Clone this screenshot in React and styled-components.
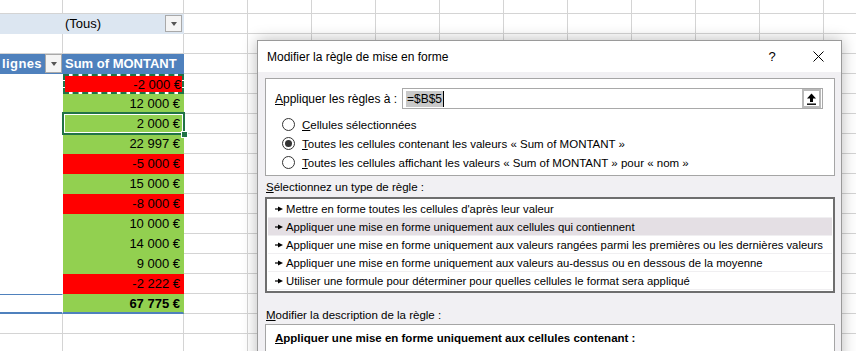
import React from 'react';
import styled, { createGlobalStyle } from 'styled-components';

const GlobalStyle = createGlobalStyle`
    html, body {
        margin: 0;
        padding: 0;
        background: #fff;
        overflow: hidden;
    }
`;

const GRID = '#d4d4d4';
const GREEN = '#92d050';
const RED = '#ff0000';
const PIVOT_BLUE = '#4f81bd';
const PIVOT_LIGHT = '#dce6f1';
const XL_GREEN = '#217346';

const Screen = styled.div`
    position: relative;
    width: 856px;
    height: 351px;
    overflow: hidden;
    background: #fff;
    font-family: "Liberation Sans", Arial, sans-serif;
`;

const Sheet = styled.div`
    display: flex;
    flex-direction: column;
`;

const Row = styled.div`
    display: flex;
    height: ${p => p.$h || 20}px;
    flex-shrink: 0;
`;

const Cell = styled.div`
    box-sizing: border-box;
    width: ${p => p.$w}px;
    flex-shrink: 0;
    display: flex;
    align-items: center;
    justify-content: ${p => (p.$align === 'right' ? 'flex-end' : 'flex-start')};
    gap: 4px;
    padding: 0 3px 0 2px;
    overflow: hidden;
    white-space: nowrap;
    background: ${p => p.$fill || '#fff'};
    border-right: 1px solid ${p => p.$fill || GRID};
    border-bottom: 1px solid ${p => p.$fill || GRID};
    color: ${p => (p.$head ? '#fff' : '#000')};
    font-size: 13px;
    font-weight: ${p => (p.$bold || p.$head ? 700 : 400)};

    ${p => p.$total && `
        border-top: 1px solid ${PIVOT_BLUE};
        border-bottom: 2px solid ${PIVOT_BLUE};
    `}
    ${p => p.$bottomLine && `border-bottom: 2px solid ${PIVOT_BLUE};`}
`;

const CopiedCell = styled(Cell)`
    border: 2px dashed ${XL_GREEN};
    background-clip: padding-box;
    padding-right: 1px;
`;

const ActiveCell = styled(Cell)`
    position: relative;
    overflow: visible;

    &::after {
        content: '';
        position: absolute;
        left: -1px;
        top: -2px;
        right: -2px;
        bottom: -2px;
        border: 2px solid ${XL_GREEN};
        box-shadow: inset 0 0 0 1px #fff;
        pointer-events: none;
    }
    &::before {
        content: '';
        position: absolute;
        right: -5px;
        bottom: -5px;
        width: 5px;
        height: 5px;
        background: ${XL_GREEN};
        border: 1px solid #fff;
        z-index: 2;
    }
`;

const Overflowing = styled.span`
    flex-shrink: 0;
    margin-right: -1px;
    letter-spacing: 0.4px;
`;

const DropButton = styled.span`
    box-sizing: border-box;
    flex-shrink: 0;
    width: 17px;
    height: ${p => p.$h}px;
    margin-left: auto;
    margin-right: ${p => p.$mr}px;
    border: 1px solid #a9a9a9;
    background: #f4f4f4;
    display: flex;
    align-items: center;
    justify-content: center;

    &::after {
        content: '';
        border-left: 3.5px solid transparent;
        border-right: 3.5px solid transparent;
        border-top: 4px solid #555;
    }
`;

/* dialog */

const Dialog = styled.div`
    position: absolute;
    left: 257px;
    top: 40px;
    width: 585px;
    height: 340px;
    box-sizing: border-box;
    border: 1px solid #9a9a9a;
    box-shadow: 0 0 14px rgba(0, 0, 0, 0.28);
    background: #f1f0f3;
    display: flex;
    flex-direction: column;
    font-size: 11.5px;
    color: #000;
`;

const TitleBar = styled.div`
    height: 31px;
    display: flex;
    align-items: center;
    background: #fff;
    padding-left: 9px;
    font-size: 12px;
`;

const Title = styled.div`
    flex: 1;
`;

const TitleButton = styled.div`
    width: 46px;
    height: 31px;
    display: flex;
    align-items: center;
    justify-content: center;
    font-size: 13px;
`;

const Body = styled.div`
    display: flex;
    flex-direction: column;
    padding: 6px 6px 0 7px;
`;

const GroupBox = styled.div`
    border: 1px solid #a5a5a5;
    background: #fff;
    padding: 9px 11px 3px 9px;
    display: flex;
    flex-direction: column;
`;

const RangeRow = styled.div`
    display: flex;
    align-items: center;
    height: 21px;
    margin-bottom: 6px;
`;

const RangeLabel = styled.div`
    width: 127px;
    flex-shrink: 0;
    font-size: 12px;
`;

const RangeInput = styled.div`
    box-sizing: border-box;
    flex: 1;
    height: 21px;
    border: 1px solid #a9a9a9;
    display: flex;
    align-items: center;
    padding-left: 3px;
    padding-right: 1px;
    font-size: 12px;
`;

const Selection = styled.span`
    background: #c9c9c9;
    padding: 1px 1px;
    border-right: 1px solid #000;
`;

const CollapseButton = styled.div`
    box-sizing: border-box;
    margin-left: auto;
    width: 19px;
    height: 19px;
    border: 2px solid #b9b9b9;
    background: #fff;
    display: flex;
    align-items: center;
    justify-content: center;
`;

const RadioRow = styled.div`
    display: flex;
    align-items: center;
    height: 19px;
    padding-left: 7px;
    gap: 7px;
`;

const Radio = styled.span`
    box-sizing: border-box;
    flex-shrink: 0;
    width: 13px;
    height: 13px;
    border-radius: 50%;
    border: 1px solid #333;
    background: #fff;
    display: flex;
    align-items: center;
    justify-content: center;

    &::after {
        content: '';
        width: 7px;
        height: 7px;
        border-radius: 50%;
        background: ${p => (p.$checked ? '#333' : 'transparent')};
    }
`;

const SectionLabel = styled.div`
    height: ${p => p.$h}px;
    margin-top: ${p => p.$mt || 0}px;
    display: flex;
    align-items: center;
    padding-left: 1px;
`;

const ListBox = styled.div`
    border: 2px solid #6e6e6e;
    background: #fff;
    padding: 1px;
    display: flex;
    flex-direction: column;
`;

const ListItem = styled.div`
    box-sizing: border-box;
    height: 18px;
    display: flex;
    align-items: center;
    gap: 3px;
    padding-left: 7px;
    white-space: nowrap;
    overflow: hidden;
    font-size: 11.3px;
    background: ${p => (p.$active ? '#e4dfe4' : '#fff')};
    border-bottom: 1px solid #f0eff1;

    svg {
        flex-shrink: 0;
    }
`;

const DescBox = styled.div`
    border: 1px solid #a5a5a5;
    background: #fff;
    padding: 7px 9px;
    height: 60px;
    font-weight: 700;
`;

const Marker = () => (
    <svg width="8" height="6" viewBox="0 0 8 6">
        <path d="M0 3h4" stroke="#000" strokeWidth="1.2" />
        <polygon points="3,0.5 8,3 3,5.5" fill="#000" />
    </svg>
);

const UpArrow = () => (
    <svg width="11" height="12" viewBox="0 0 11 12">
        <polygon points="5.5,0.5 10,5.5 1,5.5" fill="#000" />
        <rect x="4" y="5" width="3" height="4" fill="#000" />
        <rect x="1" y="10.5" width="9" height="1.4" fill="#000" />
    </svg>
);

const CloseIcon = () => (
    <svg width="11" height="11" viewBox="0 0 11 11">
        <path d="M0.5 0.5L10.5 10.5M10.5 0.5L0.5 10.5" stroke="#000" strokeWidth="1" />
    </svg>
);

const COLS = [63, 121, ...Array(11).fill(64)];

const values = [
    { v: '-2 000 €', neg: true, copied: true },
    { v: '12 000 €' },
    { v: '2 000 €', active: true },
    { v: '22 997 €' },
    { v: '-5 000 €', neg: true },
    { v: '15 000 €' },
    { v: '-8 000 €', neg: true },
    { v: '10 000 €' },
    { v: '14 000 €' },
    { v: '9 000 €' },
    { v: '-2 222 €', neg: true },
];

const rules = [
    "Mettre en forme toutes les cellules d'après leur valeur",
    'Appliquer une mise en forme uniquement aux cellules qui contiennent',
    'Appliquer une mise en forme uniquement aux valeurs rangées parmi les premières ou les dernières valeurs',
    'Appliquer une mise en forme uniquement aux valeurs au-dessus ou en dessous de la moyenne',
    'Utiliser une formule pour déterminer pour quelles cellules le format sera appliqué',
];

// colonnes vides à droite du tableau croisé
const Rest = () => COLS.slice(2).map((w, i) => <Cell key={i} $w={w} />);

const App = () => {
    return (
        <Screen>
            <GlobalStyle />
            <Sheet>
                <Row $h={14}>
                    {COLS.map((w, i) => <Cell key={i} $w={w} />)}
                </Row>
                <Row>
                    <Cell $w={COLS[0]} $fill={PIVOT_LIGHT} />
                    <Cell $w={COLS[1]} $fill={PIVOT_LIGHT}>
                        (Tous)
                        <DropButton $h={17} $mr={-2} />
                    </Cell>
                    <Rest />
                </Row>
                <Row>
                    {COLS.map((w, i) => <Cell key={i} $w={w} />)}
                </Row>
                <Row>
                    <Cell $w={COLS[0]} $fill={PIVOT_BLUE} $head $align="right">
                        <Overflowing>Étiquettes de lignes</Overflowing>
                        <DropButton $h={19} $mr={-3} />
                    </Cell>
                    <Cell $w={COLS[1]} $fill={PIVOT_BLUE} $head>Sum of MONTANT</Cell>
                    <Rest />
                </Row>
                {values.map((r, i) => {
                    const Value = r.copied ? CopiedCell : r.active ? ActiveCell : Cell;
                    return (
                        <Row key={i}>
                            <Cell $w={COLS[0]} $fill="#fff" />
                            <Value $w={COLS[1]} $fill={r.neg ? RED : GREEN} $align="right">
                                {r.v}
                            </Value>
                            <Rest />
                        </Row>
                    );
                })}
                <Row>
                    <Cell $w={COLS[0]} $fill="#fff" $total />
                    <Cell $w={COLS[1]} $fill={GREEN} $align="right" $bold $bottomLine>
                        67 775 €
                    </Cell>
                    <Rest />
                </Row>
                <Row>
                    {COLS.map((w, i) => <Cell key={i} $w={w} />)}
                </Row>
                <Row>
                    {COLS.map((w, i) => <Cell key={i} $w={w} />)}
                </Row>
            </Sheet>

            <Dialog>
                <TitleBar>
                    <Title>Modifier la règle de mise en forme</Title>
                    <TitleButton>?</TitleButton>
                    <TitleButton><CloseIcon /></TitleButton>
                </TitleBar>
                <Body>
                    <GroupBox>
                        <RangeRow>
                            <RangeLabel><u>A</u>ppliquer les règles à :</RangeLabel>
                            <RangeInput>
                                <Selection>=$B$5</Selection>
                                <CollapseButton><UpArrow /></CollapseButton>
                            </RangeInput>
                        </RangeRow>
                        <RadioRow>
                            <Radio />
                            <span><u>C</u>ellules sélectionnées</span>
                        </RadioRow>
                        <RadioRow>
                            <Radio $checked />
                            <span><u>T</u>outes les cellules contenant les valeurs « Sum of MONTANT »</span>
                        </RadioRow>
                        <RadioRow>
                            <Radio />
                            <span><u>T</u>outes les cellules affichant les valeurs « Sum of MONTANT » pour « nom »</span>
                        </RadioRow>
                    </GroupBox>

                    <SectionLabel $h={21}><u>S</u>électionnez un type de règle :</SectionLabel>
                    <ListBox>
                        {rules.map((t, i) => (
                            <ListItem key={i} $active={i === 1}>
                                <Marker />
                                {t}
                            </ListItem>
                        ))}
                    </ListBox>

                    <SectionLabel $h={19} $mt={12}><u>M</u>odifier la description de la règle :</SectionLabel>
                    <DescBox><u>A</u>ppliquer une mise en forme uniquement aux cellules contenant :</DescBox>
                </Body>
            </Dialog>
        </Screen>
    );
};

export default App;
